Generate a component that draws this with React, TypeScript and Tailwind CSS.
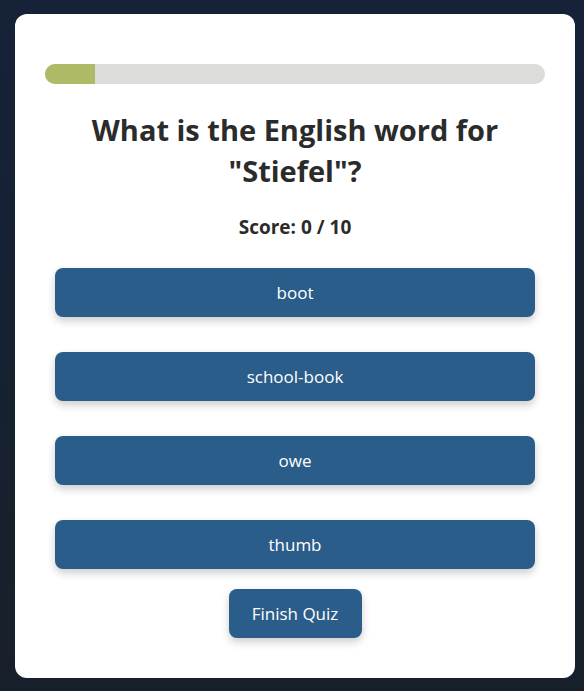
const options = ["boot", "school-book", "owe", "thumb"];

export default function App() {
    const current = 1;
    const total = 10;
    return (
        <div
            className="min-h-[691px] w-full bg-gradient-to-b from-[#152238] to-[#17202a] pl-[15px] pt-[14px] pb-[14px]"
            style={{ fontFamily: '"Open Sans", "Noto Sans", sans-serif' }}
        >
            <div className="w-[560px] bg-white rounded-xl px-[30px] pt-[50px] pb-[40px] flex flex-col items-center">
                <div className="w-full h-5 rounded-full bg-[#dcdcdb] overflow-hidden">
                    <div
                        className="h-full bg-[#b0b966]"
                        style={{ width: `${(current / total) * 100}%` }}
                    />
                </div>
                <h1 className="mt-[25px] text-[29px] leading-[41px] font-bold text-[#2b2b2b] text-center px-10">
                    What is the English word for "Stiefel"?
                </h1>
                <p className="mt-[23px] text-[19px] leading-[27px] font-bold text-[#2b2b2b]">
                    Score: 0 / 10
                </p>
                <div className="w-full px-[10px] mt-[27px] flex flex-col gap-[35px]">
                    {options.map((opt) => (
                        <button
                            key={opt}
                            className="w-full h-[49px] rounded-lg bg-[#2a5d8a] text-white text-[17px] shadow-[0_4px_8px_rgba(0,0,0,0.2)]"
                        >
                            {opt}
                        </button>
                    ))}
                </div>
                <button className="mt-5 h-[49px] w-[133px] rounded-lg bg-[#2a5d8a] text-white text-[17px] shadow-[0_4px_8px_rgba(0,0,0,0.2)]">
                    Finish Quiz
                </button>
            </div>
        </div>
    );
}
